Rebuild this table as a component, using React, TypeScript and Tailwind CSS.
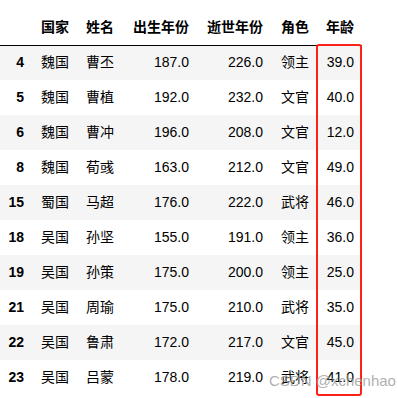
export default function App() {
  const cols = ['国家', '姓名', '出生年份', '逝世年份', '角色', '年龄']
  const rows = [
    { idx: 4, country: '魏国', name: '曹丕', born: '187.0', died: '226.0', role: '领主', age: '39.0' },
    { idx: 5, country: '魏国', name: '曹植', born: '192.0', died: '232.0', role: '文官', age: '40.0' },
    { idx: 6, country: '魏国', name: '曹冲', born: '196.0', died: '208.0', role: '文官', age: '12.0' },
    { idx: 8, country: '魏国', name: '荀彧', born: '163.0', died: '212.0', role: '文官', age: '49.0' },
    { idx: 15, country: '蜀国', name: '马超', born: '176.0', died: '222.0', role: '武将', age: '46.0' },
    { idx: 18, country: '吴国', name: '孙坚', born: '155.0', died: '191.0', role: '领主', age: '36.0' },
    { idx: 19, country: '吴国', name: '孙策', born: '175.0', died: '200.0', role: '领主', age: '25.0' },
    { idx: 21, country: '吴国', name: '周瑜', born: '175.0', died: '210.0', role: '武将', age: '35.0' },
    { idx: 22, country: '吴国', name: '鲁肃', born: '172.0', died: '217.0', role: '文官', age: '45.0' },
    { idx: 23, country: '吴国', name: '吕蒙', born: '178.0', died: '219.0', role: '武将', age: '41.0' },
  ]
  const widths = ['w-[45px]', 'w-[45px]', 'w-[75px]', 'w-[74px]', 'w-[46px]', 'w-[45px]']

  return (
    <div
      className="relative w-[397px] h-[398px] overflow-hidden bg-white pt-[10px] text-[14px] text-black"
      style={{ fontFamily: '"Liberation Sans", Arial, "Noto Sans CJK SC", sans-serif' }}
    >
      <table className="table-fixed border-collapse w-[362px]">
        <thead>
          <tr className="h-[35px] border-b border-black">
            <th className="w-[32px] px-2"></th>
            {cols.map((c, i) => (
              <th key={c} className={`${widths[i]} px-2 text-right font-bold whitespace-nowrap`}>
                {c}
              </th>
            ))}
          </tr>
        </thead>
        <tbody>
          {rows.map((r, i) => (
            <tr key={r.idx} className={`h-[35px] ${i % 2 === 0 ? 'bg-[#f5f5f5]' : 'bg-white'}`}>
              <th className="px-2 text-right font-bold">{r.idx}</th>
              <td className="px-2 text-right whitespace-nowrap">{r.country}</td>
              <td className="px-2 text-right whitespace-nowrap">{r.name}</td>
              <td className="px-2 text-right">{r.born}</td>
              <td className="px-2 text-right">{r.died}</td>
              <td className="px-2 text-right whitespace-nowrap">{r.role}</td>
              <td className="px-2 text-right">{r.age}</td>
            </tr>
          ))}
        </tbody>
      </table>

      {/* red highlight around the age column */}
      <div className="absolute left-[316px] top-[44px] w-[46px] h-[352px] border-2 border-[#ff2018] rounded-[3px] pointer-events-none"></div>

      {/* watermark */}
      <div className="absolute left-[269px] top-[370px] text-[15px] text-[#9a9a9a]/80 whitespace-nowrap pointer-events-none">
        CSDN @xchenhao
      </div>
    </div>
  )
}
